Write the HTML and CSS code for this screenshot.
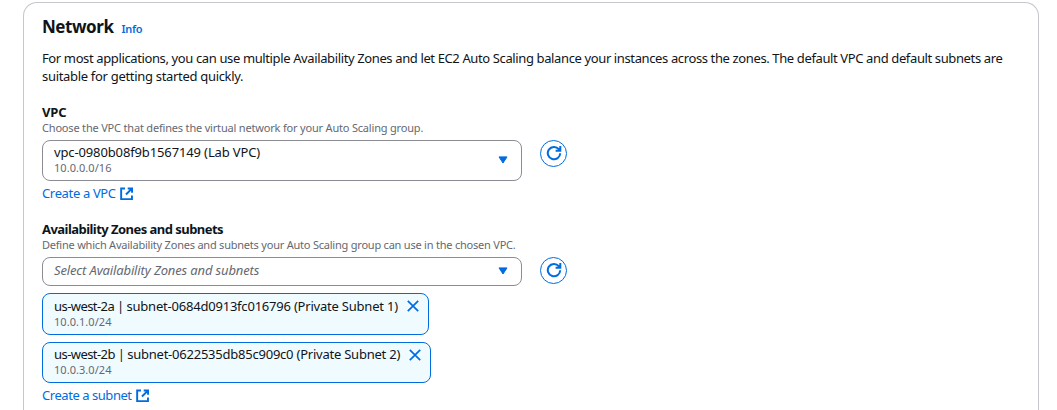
FILE: index.html
```html
<!DOCTYPE html>
<html lang="en">
<head>
<meta charset="utf-8">
<title>Network</title>
<link rel="stylesheet" href="styles.css">
</head>
<body>
<svg class="sprite" aria-hidden="true">
  <symbol id="external" viewBox="0 0 14 14"><path d="M5.2 1.5H1.2v11.2h11.2V8.8M8 1.5h4.5V6M12.3 1.7 6.2 7.8"/></symbol>
  <symbol id="refresh" viewBox="0 0 16 16"><path d="M14.2 8.2A6.2 6.2 0 1 1 12.8 4.2L14 5.5M14.3 1v4.7H9.6"/></symbol>
  <symbol id="close" viewBox="0 0 12 12"><path d="m.8.8 10.4 10.4M11.2.8.8 11.2"/></symbol>
  <symbol id="caret" viewBox="0 0 10 8"><path d="M1 .9h8L5 7z"/></symbol>
</svg>
<main class="card">
  <header class="heading"><h2 class="title">Network</h2><a class="info">Info</a></header>
  <p class="description"><span class="line line-one">For most applications, you can use multiple Availability Zones and let EC2 Auto Scaling balance your instances across the zones. The default VPC and default subnets are</span> <span class="line line-two">suitable for getting started quickly.</span></p>

  <section class="field vpc">
    <h3 class="label"><span class="label-vpc">VPC</span></h3>
    <p class="hint"><span class="hint-vpc">Choose the VPC that defines the virtual network for your Auto Scaling group.</span></p>
    <div class="control">
      <div class="select tall">
        <div class="option"><span class="name name-vpc">vpc-0980b08f9b1567149 (Lab VPC)</span><span class="cidr">10.0.0.0/16</span></div>
        <svg class="caret"><use href="#caret"/></svg>
      </div>
      <button class="refresh" aria-label="Refresh"><svg class="icon"><use href="#refresh"/></svg></button>
    </div>
    <a class="link"><span class="link-vpc">Create a VPC</span><svg class="external"><use href="#external"/></svg></a>
  </section>

  <section class="field zones">
    <h3 class="label"><span class="label-zones">Availability Zones and subnets</span></h3>
    <p class="hint"><span class="hint-zones">Define which Availability Zones and subnets your Auto Scaling group can use in the chosen VPC.</span></p>
    <div class="control">
      <div class="select short">
        <span class="placeholder">Select Availability Zones and subnets</span>
        <svg class="caret"><use href="#caret"/></svg>
      </div>
      <button class="refresh" aria-label="Refresh"><svg class="icon"><use href="#refresh"/></svg></button>
    </div>
    <div class="tokens">
      <div class="token first">
        <div class="option"><span class="name name-a"><span class="zone">us-west-2a | </span>subnet-0684d0913fc016796 (Private Subnet 1)</span><span class="cidr">10.0.1.0/24</span></div>
        <svg class="close"><use href="#close"/></svg>
      </div>
      <div class="token second">
        <div class="option"><span class="name name-b"><span class="zone">us-west-2b | </span>subnet-0622535db85c909c0 (Private Subnet 2)</span><span class="cidr">10.0.3.0/24</span></div>
        <svg class="close"><use href="#close"/></svg>
      </div>
    </div>
    <a class="link subnet"><span class="link-subnet">Create a subnet</span><svg class="external"><use href="#external"/></svg></a>
  </section>
</main>
</body>
</html>
```
FILE: styles.css
```css
* { box-sizing: border-box; }
body { margin: 0; height: 410px; overflow: hidden; background: #fff; color: #0f141a; font: 13px/18px "Noto Sans", "Open Sans", sans-serif; }
h2, h3, p { margin: 0; }
span { white-space: nowrap; }
.sprite { position: absolute; width: 0; height: 0; }
.card { width: 1016px; height: 408px; margin: 2px 0 0 23px; padding: 12px 18px 0 18.5px; border: 1px solid #c6c6cd; border-bottom: 0; border-radius: 14px 14px 0 0; }
.card { padding-left: 18px; }
.heading { display: flex; align-items: baseline; gap: 8px; height: 24px; }
.title { font-size: 17px; line-height: 24px; font-weight: 700; letter-spacing: -.45px; }
.info { color: #006ce0; font-size: 11px; font-weight: 600; line-height: 16px; letter-spacing: -.3px; }
.description { margin-top: 10px; height: 36px; }
.line { display: block; width: max-content; }
.line-one { letter-spacing: -.377px; }
.line-two { letter-spacing: -.31px; }
.vpc { margin-top: 18px; }
.label { height: 18px; font-size: 13px; line-height: 18px; font-weight: 700; }
.label-vpc { letter-spacing: -.1px; }
.label-zones { letter-spacing: -.54px; }
.hint { height: 14px; color: #656871; font-size: 11px; line-height: 14px; }
.hint-vpc { letter-spacing: -.185px; }
.hint-zones { letter-spacing: -.218px; }
.control { display: flex; gap: 18px; margin-top: 5px; }
.select { display: flex; justify-content: space-between; width: 480px; border: 1px solid #8c8c94; border-radius: 8px; padding: 0 13px 0 11px; }
.tall { height: 41px; }
.short { height: 29px; }
.option { display: flex; flex-direction: column; padding-top: 3px; }
.name { height: 17px; line-height: 18px; }
.name-vpc { letter-spacing: -.13px; line-height: 16px; }
.name-a { letter-spacing: -.21px; }
.name-b { letter-spacing: -.23px; line-height: 16px; }
.zone { letter-spacing: -.56px; }
.cidr { color: #656871; font-size: 11px; line-height: 14px; letter-spacing: .05px; }
.first .cidr { line-height: 16px; }
.caret { align-self: center; width: 10px; height: 8px; margin-bottom: 1px; fill: #006ce0; stroke: #006ce0; stroke-width: 1; stroke-linejoin: round; }
.refresh { display: grid; place-items: center; width: 27px; height: 27px; padding: 0 0 1px; border: 1px solid #006ce0; border-radius: 50%; background: #fff; }
.icon { width: 16px; height: 16px; fill: none; stroke: #006ce0; stroke-width: 2; }
.link { display: flex; align-items: center; gap: 4px; height: 18px; margin-top: 3px; color: #006ce0; }
.link-vpc { letter-spacing: -.35px; }
.link-subnet { letter-spacing: -.45px; }
.external { width: 13.5px; height: 13.5px; margin-top: 1px; fill: none; stroke: #006ce0; stroke-width: 2; }
.zones { margin-top: 18px; }
.placeholder { line-height: 25px; font-style: italic; color: #656871; letter-spacing: -.14px; }
.tokens { display: flex; flex-direction: column; gap: 7px; margin-top: 7px; }
.token { display: flex; justify-content: space-between; height: 42px; padding: 0 9px 0 11px; border: 1px solid #006ce0; border-radius: 8px; background: #f0fbff; }
.first { width: 387px; }
.second { width: 389px; height: 41px; }
.close { width: 12px; height: 12px; margin-top: 6px; fill: none; stroke: #006ce0; stroke-width: 1.7; }
```
